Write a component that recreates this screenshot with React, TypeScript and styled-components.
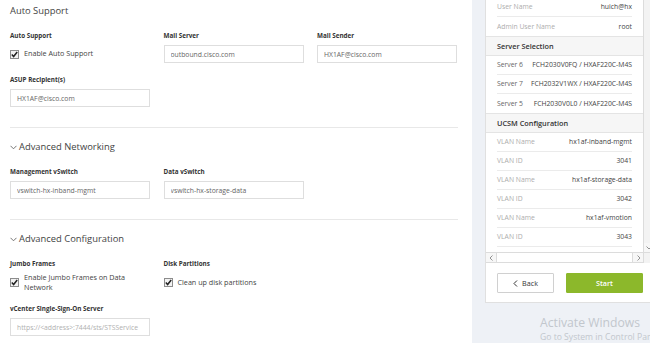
import React from 'react';
import styled, { createGlobalStyle } from 'styled-components';

const Global = createGlobalStyle`
  html, body { margin: 0; padding: 0; overflow: hidden; background: #eef1f6; }
  body { font-family: "Open Sans", "Liberation Sans", sans-serif; }
  * { box-sizing: border-box; }
`;

const Page = styled.div`
  position: relative;
  display: flex;
  width: 668px;
  height: 343px;
  overflow: hidden;
`;

const Main = styled.main`
  flex: none;
  width: 472px;
  height: 100%;
  background: #fff;
  padding: 0 14px 0 10px;
`;

const Section = styled.section<{ $first?: boolean }>`
  padding: ${(p) => (p.$first ? '4px' : '12px')} 0 20px;
  border-bottom: 1px solid #e8e8e8;
  &:last-child {
    border-bottom: none;
  }
`;

const Heading = styled.h2`
  margin: 0 0 13px;
  display: flex;
  align-items: center;
  gap: 2px;
  font-size: 9.4px;
  font-weight: 400;
  line-height: 14px;
  color: #444;
`;

const FieldGrid = styled.div`
  display: grid;
  grid-template-columns: repeat(3, 140px);
  column-gap: 13.5px;
  row-gap: 12px;
`;

const Field = styled.div<{ $newRow?: boolean }>`
  display: flex;
  flex-direction: column;
  ${(p) => (p.$newRow ? 'grid-column: 1;' : '')}
`;

const Label = styled.div`
  font-size: 6.3px;
  font-weight: 700;
  line-height: 9px;
  color: #333;
  margin-bottom: 5px;
  white-space: nowrap;
`;

const Input = styled.input`
  width: 140px;
  height: 18px;
  border: 1px solid #dedede;
  padding: 0 6px;
  font-family: inherit;
  font-size: 6.8px;
  color: #666;
  background: #fff;
  outline: none;
  &::placeholder {
    color: #b0b0b0;
  }
`;

const CheckRow = styled.label`
  display: flex;
  align-items: center;
  gap: 5px;
  min-height: 18px;
  flex: 1;
  font-size: 7.2px;
  line-height: 9.5px;
  color: #444;
`;

const Box = styled.span`
  flex: none;
  width: 9px;
  height: 9px;
  border: 1px solid #8c8c8c;
  background: #f2f2f2;
  display: flex;
  align-items: center;
  justify-content: center;
`;

const CheckText = styled.span`
  max-width: 112px;
`;

const Side = styled.aside`
  flex: none;
  width: 196px;
  padding-left: 13px;
`;

const Card = styled.div`
  width: 170px;
  background: #fff;
  border: 1px solid #e0e0e0;
  border-top: none;
  padding-bottom: 9px;
`;

const ScrollArea = styled.div`
  display: grid;
  grid-template-columns: 1fr 11px;
  grid-template-rows: 252px 11px;
`;

const Viewport = styled.div`
  overflow: hidden;
`;

const ListContent = styled.div`
  margin-top: -2.5px;
`;

const Group = styled.div``;

const Row = styled.div`
  height: 19px;
  margin: 0 11px;
  display: flex;
  align-items: center;
  justify-content: space-between;
  border-bottom: 1px solid #ebebeb;
  font-size: 6.8px;
  white-space: nowrap;
  ${Group} > &:last-child {
    border-bottom: none;
  }
`;

const RowKey = styled.span<{ $muted?: boolean }>`
  color: ${(p) => (p.$muted ? '#adadad' : '#666')};
`;

const RowValue = styled.span`
  color: #444;
`;

const GroupHeader = styled.div`
  height: 20px;
  padding: 0 11px;
  display: flex;
  align-items: center;
  background: #f6f6f6;
  border-top: 1px solid #e4e4e4;
  border-bottom: 1px solid #e4e4e4;
  font-size: 7.3px;
  font-weight: 600;
  color: #333;
`;

const VTrack = styled.div`
  background: #f3f3f3;
  border-left: 1px solid #dcdcdc;
  display: flex;
  flex-direction: column;
  justify-content: flex-end;
`;

const HTrack = styled.div`
  display: flex;
  background: #fff;
  border-top: 1px solid #dcdcdc;
  border-bottom: 1px solid #dcdcdc;
`;

const ArrowCell = styled.span<{ $side: 'left' | 'right' | 'bottom' }>`
  flex: none;
  width: ${(p) => (p.$side === 'bottom' ? '100%' : '11px')};
  height: ${(p) => (p.$side === 'bottom' ? '9px' : '100%')};
  display: flex;
  align-items: center;
  justify-content: center;
  background: #f7f7f7;
  ${(p) => (p.$side === 'left' ? 'border-right: 1px solid #dcdcdc;' : '')}
  ${(p) => (p.$side === 'right' ? 'border-left: 1px solid #dcdcdc; margin-left: auto;' : '')}
`;

const Corner = styled.div`
  background: #f3f3f3;
  border-left: 1px solid #dcdcdc;
  border-top: 1px solid #dcdcdc;
`;

const Actions = styled.div`
  display: flex;
  gap: 12px;
  padding: 10px 11px 0;
`;

const Button = styled.button<{ $primary?: boolean }>`
  height: 20px;
  flex: ${(p) => (p.$primary ? '1' : '0 0 57px')};
  display: flex;
  align-items: center;
  justify-content: center;
  gap: 4px;
  font-family: inherit;
  font-size: 7.2px;
  line-height: 10px;
  font-weight: ${(p) => (p.$primary ? 600 : 400)};
  color: ${(p) => (p.$primary ? '#fff' : '#333')};
  background: ${(p) => (p.$primary ? '#8cb82b' : '#fff')};
  border: 1px solid ${(p) => (p.$primary ? '#8cb82b' : '#d0d0d0')};
  border-radius: 1px;
  padding: 0;
`;

const Watermark = styled.div`
  position: absolute;
  left: 540px;
  top: 314px;
  color: #c2c7cd;
  pointer-events: none;
  white-space: nowrap;
`;

const WatermarkTitle = styled.div`
  font-size: 12.2px;
  line-height: 17px;
`;

const WatermarkSub = styled.div`
  font-size: 8.6px;
  line-height: 12px;
`;

const Chevron = () => (
  <svg width="7" height="5" viewBox="0 0 7 5">
    <polyline points="0.5,0.8 3.5,3.8 6.5,0.8" fill="none" stroke="#666" strokeWidth="0.9" />
  </svg>
);

const Check = () => (
  <svg width="7" height="7" viewBox="0 0 7 7">
    <polyline points="0.8,3.6 2.6,5.5 6.2,1" fill="none" stroke="#222" strokeWidth="1.5" />
  </svg>
);

const Arrow = ({ dir }: { dir: 'left' | 'right' | 'down' }) => {
  const pts =
    dir === 'left' ? '3.5,0.5 1,3 3.5,5.5' : dir === 'right' ? '1.5,0.5 4,3 1.5,5.5' : '0.5,1.5 3,4 5.5,1.5';
  return (
    <svg width={dir === 'down' ? 6 : 5} height={dir === 'down' ? 5 : 6} viewBox={dir === 'down' ? '0 0 6 5' : '0 0 5 6'}>
      <polyline points={pts} fill="none" stroke="#777" strokeWidth="0.8" />
    </svg>
  );
};

const Checkbox = ({ text }: { text: string }) => (
  <CheckRow>
    <Box>
      <Check />
    </Box>
    <CheckText>{text}</CheckText>
  </CheckRow>
);

const TextField = ({
  label,
  value,
  placeholder,
  newRow,
}: {
  label: string;
  value?: string;
  placeholder?: string;
  newRow?: boolean;
}) => (
  <Field $newRow={newRow}>
    <Label>{label}</Label>
    <Input defaultValue={value} placeholder={placeholder} readOnly />
  </Field>
);

const CheckField = ({ label, text }: { label: string; text: string }) => (
  <Field>
    <Label>{label}</Label>
    <Checkbox text={text} />
  </Field>
);

type Item = { k: string; v: string; muted?: boolean };

const topRows: Item[] = [
  { k: 'User Name', v: 'huich@hx', muted: true },
  { k: 'Admin User Name', v: 'root', muted: true },
];

const servers: Item[] = [
  { k: 'Server 6', v: 'FCH2030V0FQ / HXAF220C-M4S' },
  { k: 'Server 7', v: 'FCH2032V1WX / HXAF220C-M4S' },
  { k: 'Server 5', v: 'FCH2030V0L0 / HXAF220C-M4S' },
];

const ucsm: Item[] = [
  { k: 'VLAN Name', v: 'hx1af-inband-mgmt', muted: true },
  { k: 'VLAN ID', v: '3041', muted: true },
  { k: 'VLAN Name', v: 'hx1af-storage-data', muted: true },
  { k: 'VLAN ID', v: '3042', muted: true },
  { k: 'VLAN Name', v: 'hx1af-vmotion', muted: true },
  { k: 'VLAN ID', v: '3043', muted: true },
  { k: 'VLAN Name', v: 'hx1af-vm-network', muted: true },
];

const Rows = ({ items }: { items: Item[] }) => (
  <Group>
    {items.map((it, i) => (
      <Row key={i}>
        <RowKey $muted={it.muted}>{it.k}</RowKey>
        <RowValue>{it.v}</RowValue>
      </Row>
    ))}
  </Group>
);

export default function App() {
  return (
    <>
      <Global />
      <Page>
        <Main>
          <Section $first>
            <Heading>Auto Support</Heading>
            <FieldGrid>
              <CheckField label="Auto Support" text="Enable Auto Support" />
              <TextField label="Mail Server" value="outbound.cisco.com" />
              <TextField label="Mail Sender" value="HX1AF@cisco.com" />
              <TextField label="ASUP Recipient(s)" value="HX1AF@cisco.com" />
            </FieldGrid>
          </Section>
          <Section>
            <Heading>
              <Chevron />
              Advanced Networking
            </Heading>
            <FieldGrid>
              <TextField label="Management vSwitch" value="vswitch-hx-inband-mgmt" />
              <TextField label="Data vSwitch" value="vswitch-hx-storage-data" />
            </FieldGrid>
          </Section>
          <Section>
            <Heading>
              <Chevron />
              Advanced Configuration
            </Heading>
            <FieldGrid>
              <CheckField label="Jumbo Frames" text="Enable Jumbo Frames on Data Network" />
              <CheckField label="Disk Partitions" text="Clean up disk partitions" />
              <TextField
                label="vCenter Single-Sign-On Server"
                placeholder="https://<address>:7444/sts/STSService"
                newRow
              />
            </FieldGrid>
          </Section>
        </Main>
        <Side>
          <Card>
            <ScrollArea>
              <Viewport>
                <ListContent>
                  <Rows items={topRows} />
                  <GroupHeader>Server Selection</GroupHeader>
                  <Rows items={servers} />
                  <GroupHeader>UCSM Configuration</GroupHeader>
                  <Rows items={ucsm} />
                </ListContent>
              </Viewport>
              <VTrack>
                <ArrowCell $side="bottom">
                  <Arrow dir="down" />
                </ArrowCell>
              </VTrack>
              <HTrack>
                <ArrowCell $side="left">
                  <Arrow dir="left" />
                </ArrowCell>
                <ArrowCell $side="right">
                  <Arrow dir="right" />
                </ArrowCell>
              </HTrack>
              <Corner />
            </ScrollArea>
            <Actions>
              <Button>
                <svg width="5" height="7" viewBox="0 0 5 7">
                  <polyline points="4,0.5 1,3.5 4,6.5" fill="none" stroke="#333" strokeWidth="1" />
                </svg>
                Back
              </Button>
              <Button $primary>Start</Button>
            </Actions>
          </Card>
        </Side>
        <Watermark>
          <WatermarkTitle>Activate Windows</WatermarkTitle>
          <WatermarkSub>Go to System in Control Panel to activate Windows.</WatermarkSub>
        </Watermark>
      </Page>
    </>
  );
}
